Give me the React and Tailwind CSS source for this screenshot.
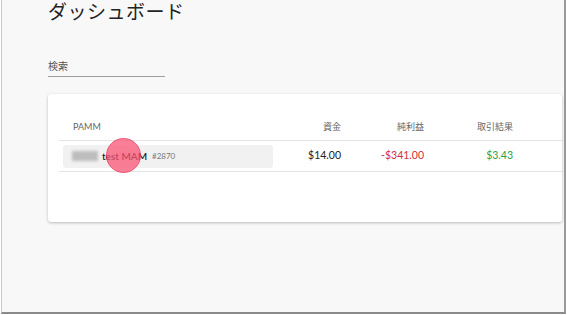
import React from "react";

const rows = [
  { name: "test MAM", id: "#2870", fund: "$14.00", net: "-$341.00", result: "$3.43" },
];

export default function App() {
  return (
    <div className="w-[567px] h-[315px] overflow-hidden bg-white" style={{ fontFamily: "Lato, 'Noto Sans CJK JP', sans-serif" }}>
      <div className="h-[314px] ml-[1px] mr-[1px] border-l border-r-2 border-b-2 border-l-[#c8c8c8] border-r-[#9a9a9a] border-b-[#8a8a8a] bg-[#f8f8f8] pl-[46px] pr-[2px]">
        <h1 className="pt-[1px] text-[19px] leading-[22px] text-[#222] tracking-[0.5px]">ダッシュボード</h1>

        <div className="mt-[36px] w-[117px] border-b border-[#9e9e9e] pb-[3px] text-[10px] leading-[14px] text-[#555]">検索</div>

        <div className="mt-[17px] h-[128px] rounded-[3px] bg-white shadow-[0_1px_3px_rgba(0,0,0,0.25)] pl-[11px] pt-[20px]">
          <div className="flex items-center h-[27px] border-b border-[#e4e4e4] text-[9px] text-[#666]">
            <div className="w-[214px] pl-[14px]">PAMM</div>
            <div className="w-[68px] text-right">資金</div>
            <div className="w-[83px] text-right">純利益</div>
            <div className="w-[89px] text-right">取引結果</div>
          </div>
          {rows.map((r) => (
            <div key={r.id} className="flex items-center h-[31px] border-b border-[#e4e4e4] text-[10.5px]">
              <div className="w-[214px] pl-[4px]">
                <div className="relative flex items-center h-[23px] w-[210px] rounded-[3px] bg-[#f1f1f1] pl-[9px]">
                  <div className="h-[10px] w-[26px] bg-[#bdbdbd] blur-[1.5px]" />
                  <span className="ml-[4px] font-semibold text-[#222] text-[10px]">{r.name}</span>
                  <span className="ml-[5px] text-[8px] text-[#777]">{r.id}</span>
                  <div className="absolute left-[43px] top-[-7px] h-[35px] w-[35px] rounded-full border border-[#e8254e] bg-[#fa5575] opacity-75" />
                </div>
              </div>
              <div className="w-[68px] text-right text-[#222]">{r.fund}</div>
              <div className="w-[83px] text-right text-[#d32f3a]">{r.net}</div>
              <div className="w-[89px] text-right text-[#2e9e44]">{r.result}</div>
            </div>
          ))}
        </div>
      </div>
    </div>
  );
}
